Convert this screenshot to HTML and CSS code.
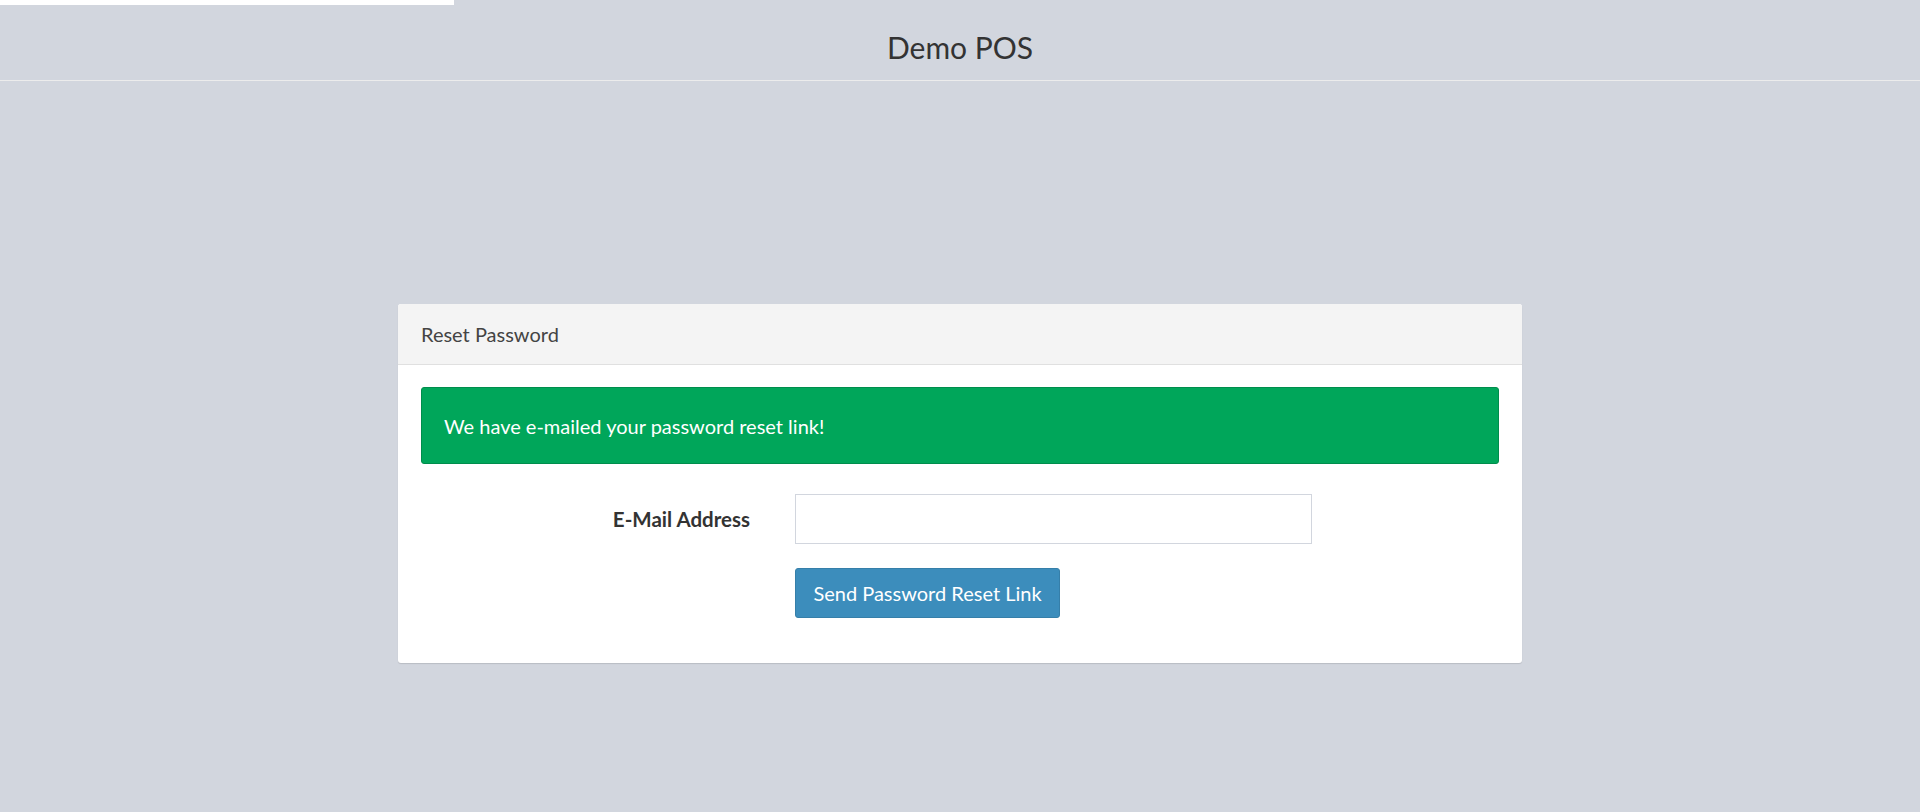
FILE: index.html
```html
<!DOCTYPE html>
<html lang="en">
<head>
<meta charset="utf-8">
<title>Demo POS</title>
<link rel="stylesheet" href="styles.css">
</head>
<body>
<div class="progress-bar"></div>
<header class="site-header">
  <h1 class="brand">Demo POS</h1>
</header>
<main class="page">
  <section class="card">
    <div class="card-header">
      <h2 class="card-title">Reset Password</h2>
    </div>
    <div class="card-body">
      <div class="alert-success">We have e-mailed your password reset link!</div>
      <form class="form">
        <div class="form-row">
          <label class="form-label" for="email">E-Mail Address</label>
          <input class="form-input" id="email" type="email">
        </div>
        <div class="form-actions">
          <button class="btn-primary" type="button">Send Password Reset Link</button>
        </div>
      </form>
    </div>
  </section>
</main>
</body>
</html>
```
FILE: styles.css
```css
* { box-sizing: border-box; }
html, body { margin: 0; padding: 0; }
body {
  background: #d2d6de;
  font-family: "Lato", "Open Sans", sans-serif;
  color: #333;
  height: 812px;
  position: relative;
}
.progress-bar {
  position: absolute;
  top: 0;
  left: 0;
  width: 454px;
  height: 5px;
  background: #fff;
}
.site-header {
  height: 81px;
  border-bottom: 1px solid #ececec;
  text-align: center;
}
.brand {
  margin: 0;
  padding-top: 14px;
  font-size: 30px;
  line-height: 66px;
  font-weight: 400;
  color: #333;
}
.page {
  padding-top: 223px;
  display: flex;
  justify-content: center;
}
.card {
  width: 1124px;
  background: #fff;
  border-radius: 3px;
  box-shadow: 0 1px 1px rgba(0, 0, 0, 0.12);
  overflow: hidden;
}
.card-header {
  height: 61px;
  background: #f4f4f4;
  border-bottom: 1px solid #e0e0e0;
  padding: 0 23px;
  display: flex;
  align-items: center;
}
.card-title {
  margin: 0;
  font-size: 20px;
  font-weight: 400;
  color: #444;
}
.card-body {
  padding: 22px 23px 45px 23px;
}
.alert-success {
  height: 77px;
  background: #00a65a;
  border: 1px solid #008d4c;
  border-radius: 3px;
  color: #fff;
  font-size: 20px;
  padding: 0 22px;
  display: flex;
  align-items: center;
}
.form {
  margin-top: 30px;
}
.form-row {
  display: flex;
  align-items: center;
  gap: 45px;
}
.form-label {
  width: 329px;
  text-align: right;
  font-weight: 700;
  font-size: 20.5px;
  color: #333;
}
.form-input {
  width: 517px;
  height: 50px;
  border: 1px solid #d2d6de;
  border-radius: 0;
  background: #fff;
  margin: 0;
}
.form-actions {
  margin-top: 24px;
  padding-left: 374px;
}
.btn-primary {
  width: 265px;
  height: 50px;
  background: #3c8dbc;
  border: 1px solid #367fa9;
  border-radius: 3px;
  color: #fff;
  font-family: inherit;
  font-size: 20px;
  padding: 0;
}
```
